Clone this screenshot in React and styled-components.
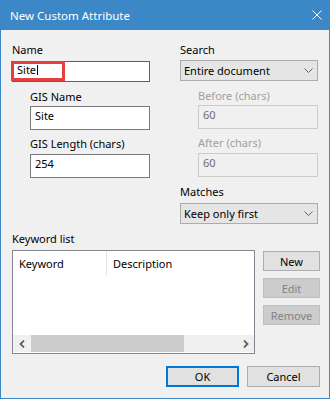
import React from "react";
import styled, { createGlobalStyle } from "styled-components";

const GlobalStyle = createGlobalStyle`
  html, body {
    margin: 0;
    padding: 0;
    background: #f0f0f0;
  }
  body {
    font-family: "Noto Sans", "Segoe UI", sans-serif;
    font-size: 11px;
    color: #000;
  }
  * {
    box-sizing: border-box;
  }
`;

function Chevron() {
  return (
    <svg width="9" height="5" viewBox="0 0 9 5">
      <path d="M0.5 0.5 L4.5 4.5 L8.5 0.5" fill="none" stroke="#606060" strokeWidth="1" />
    </svg>
  );
}

function ScrollArrow({ dir }) {
  return (
    <svg width="6" height="8" viewBox="0 0 6 8">
      <path
        d={dir === "left" ? "M5 0.5 L1.5 4 L5 7.5" : "M1 0.5 L4.5 4 L1 7.5"}
        fill="none"
        stroke="#606060"
        strokeWidth="1.8"
      />
    </svg>
  );
}

function App() {
  return (
    <>
      <GlobalStyle />
      <Window>
        <TitleBar>
          <Title>New Custom Attribute</Title>
          <Close>
            <svg width="10" height="10" viewBox="0 0 10 10">
              <path d="M0.5 0.5 L9.5 9.5 M9.5 0.5 L0.5 9.5" stroke="#fff" strokeWidth="1" />
            </svg>
          </Close>
        </TitleBar>
        <Body>
          <Columns>
            <Column>
              <Label>Name</Label>
              <Field $mt={4}>
                <TextBox $h={21} $focused>
                  Site
                  <Caret />
                </TextBox>
                <Highlight />
              </Field>
              <Indent>
                <Label $mt={7}>GIS Name</Label>
                <TextBox $mt={2}>Site</TextBox>
                <Label $mt={6}>GIS Length (chars)</Label>
                <TextBox $mt={3}>254</TextBox>
              </Indent>
            </Column>
            <Column>
              <Label>Search</Label>
              <Combo $mt={3}>
                Entire document
                <Chevron />
              </Combo>
              <Indent>
                <Label $mt={7} $disabled>
                  Before (chars)
                </Label>
                <TextBox $mt={2} $disabled>
                  60
                </TextBox>
                <Label $mt={6} $disabled>
                  After (chars)
                </Label>
                <TextBox $mt={3} $disabled>
                  60
                </TextBox>
              </Indent>
              <Label $mt={7}>Matches</Label>
              <Combo $mt={4}>
                Keep only first
                <Chevron />
              </Combo>
            </Column>
          </Columns>
          <Label $mt={7}>Keyword list</Label>
          <ListRow>
            <ListView>
              <ListHeader>
                <HeaderCell $w={93}>Keyword</HeaderCell>
                <HeaderDivider />
                <HeaderCell>Description</HeaderCell>
              </ListHeader>
              <ListBody />
              <ScrollBar>
                <ScrollButton>
                  <ScrollArrow dir="left" />
                </ScrollButton>
                <Thumb />
                <ScrollTrack />
                <ScrollButton>
                  <ScrollArrow dir="right" />
                </ScrollButton>
              </ScrollBar>
            </ListView>
            <SideButtons>
              <Button>New</Button>
              <Button disabled>Edit</Button>
              <Button disabled>Remove</Button>
            </SideButtons>
          </ListRow>
          <Footer>
            <Button $w={73} $h={21} $default>
              OK
            </Button>
            <Button $w={73} $h={21}>
              Cancel
            </Button>
          </Footer>
        </Body>
      </Window>
    </>
  );
}

export default App;

const Window = styled.div`
  width: 330px;
  height: 399px;
  display: flex;
  flex-direction: column;
  border: 1px solid #3c88c6;
  border-top: 0;
  background: #f0f0f0;
`;
const TitleBar = styled.div`
  height: 30px;
  display: flex;
  align-items: center;
  justify-content: space-between;
  padding: 0 7px 0 9px;
  background: #3c88c6;
`;
const Title = styled.div`
  color: #fff;
  font-size: 11.5px;
  line-height: 15px;
`;
const Close = styled.div`
  width: 10px;
  height: 10px;
  display: flex;
  margin-top: 0;
`;
const Body = styled.div`
  flex: 1;
  padding: 12px 9px 0 11px;
  display: flex;
  flex-direction: column;
`;
const Columns = styled.div`
  display: grid;
  grid-template-columns: 138px 138px;
  column-gap: 30px;
`;
const Column = styled.div`
  display: flex;
  flex-direction: column;
`;
const Indent = styled.div`
  display: flex;
  flex-direction: column;
  padding-left: 18px;
`;
const Label = styled.div`
  height: 15px;
  line-height: 15px;
  margin-top: ${(p) => p.$mt || 0}px;
  color: ${(p) => (p.$disabled ? "#a0a0a0" : "#000")};
  white-space: nowrap;
`;
const Field = styled.div`
  position: relative;
  margin-top: ${(p) => p.$mt || 0}px;
`;
const TextBox = styled.div`
  height: ${(p) => p.$h || 24}px;
  margin-top: ${(p) => p.$mt || 0}px;
  display: flex;
  align-items: center;
  padding: 0 4px 5px;
  line-height: 15px;
  background: ${(p) => (p.$disabled ? "#f0f0f0" : "#fff")};
  border: 1px solid
    ${(p) => (p.$focused ? "#0078d7" : p.$disabled ? "#cccccc" : "#7a7a7a")};
  color: ${(p) => (p.$disabled ? "#6d6d6d" : "#000")};
`;
const Caret = styled.span`
  display: inline-block;
  width: 1px;
  height: 10px;
  margin-left: 1px;
  margin-top: 2px;
  background: #000;
`;
const Highlight = styled.div`
  position: absolute;
  left: -1px;
  top: 0;
  width: 54px;
  height: 20px;
  border: 3px solid #e3403f;
`;
const Combo = styled.div`
  height: 21px;
  margin-top: ${(p) => p.$mt || 0}px;
  display: flex;
  align-items: center;
  justify-content: space-between;
  padding: 0 4px 0 3px;
  line-height: 15px;
  background: #e5e5e5;
  border: 1px solid #acacac;
`;
const ListRow = styled.div`
  display: flex;
  gap: 8px;
  margin-top: 4px;
`;
const ListView = styled.div`
  width: 243px;
  height: 104px;
  display: flex;
  flex-direction: column;
  background: #fff;
  border: 1px solid #828790;
`;
const ListHeader = styled.div`
  height: 25px;
  display: flex;
  align-items: stretch;
`;
const HeaderCell = styled.div`
  width: ${(p) => (p.$w ? p.$w + "px" : "auto")};
  display: flex;
  align-items: center;
  padding-left: 6px;
  line-height: 15px;
`;
const HeaderDivider = styled.div`
  width: 1px;
  background: #e5e5e5;
`;
const ListBody = styled.div`
  flex: 1;
`;
const ScrollBar = styled.div`
  height: 17px;
  display: flex;
  background: #f0f0f0;
  margin-bottom: 1px;
`;
const ScrollButton = styled.div`
  width: 17px;
  display: flex;
  align-items: center;
  justify-content: center;
`;
const Thumb = styled.div`
  width: 153px;
  margin-left: 1px;
  background: #cdcdcd;
`;
const ScrollTrack = styled.div`
  flex: 1;
`;
const SideButtons = styled.div`
  display: flex;
  flex-direction: column;
  gap: 7px;
  padding-top: 1px;
`;
const Button = styled.button`
  width: ${(p) => p.$w || 57}px;
  height: ${(p) => p.$h || 20}px;
  padding: 0;
  display: flex;
  align-items: center;
  justify-content: center;
  font-family: inherit;
  font-size: 11px;
  line-height: 15px;
  color: #000;
  background: #e1e1e1;
  border: ${(p) => (p.$default ? "2px solid #0078d7" : "1px solid #adadad")};
  border-radius: 0;

  &:disabled {
    color: #838383;
    background: #cccccc;
    border-color: #bfbfbf;
  }
`;
const Footer = styled.div`
  display: flex;
  justify-content: flex-end;
  gap: 8px;
  margin-top: 12px;
`;
